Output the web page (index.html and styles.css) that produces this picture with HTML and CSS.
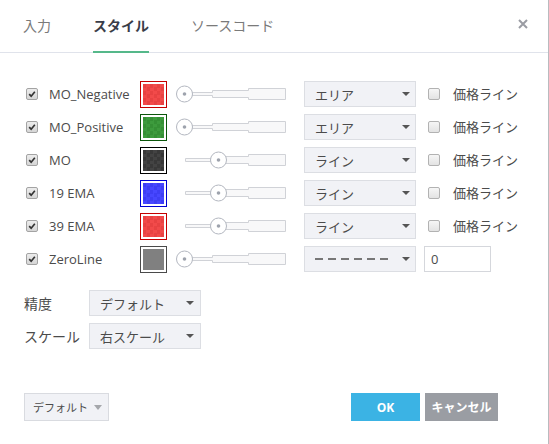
FILE: index.html
```html
<!DOCTYPE html>
<html lang="ja">
<head>
<meta charset="utf-8">
<link rel="stylesheet" href="styles.css">
</head>
<body>
<div class="dialog">
  <div class="header">
    <div class="tabs">
      <div class="tab">入力</div>
      <div class="tab active">スタイル</div>
      <div class="tab">ソースコード</div>
    </div>
    <svg class="close" width="10" height="10" viewBox="0 0 10 10"><path d="M1 1L9 9M9 1L1 9" stroke="#9a9ca3" stroke-width="2"/></svg>
  </div>

  <div class="content">
    <div class="grid">
      <!-- row 1 -->
      <span class="cb checked"><svg viewBox="0 0 12 12"><path d="M2.6 6.2L5 8.6L9.4 3.4" fill="none" stroke="#333" stroke-width="2"/></svg></span>
      <span class="label">MO_Negative</span>
      <span class="swatch red"><span class="fill"></span></span>
      <svg class="slider" width="110" height="26" viewBox="0 0 110 26"><path d="M9.5 11.5H36.5V9.5H72.5V7.5H109.5V18.5H72.5V16.5H36.5V14.5H9.5Z" fill="#f8f8f9" stroke="#d0d2d7"/><circle cx="8.5" cy="13" r="8" fill="#fff" stroke="#b3b7c0"/><circle cx="8.5" cy="13" r="1.8" fill="#9ea3ad"/></svg>
      <span class="select"><span>エリア</span><i class="caret"></i></span>
      <span class="cb"></span>
      <span class="label">価格ライン</span>

      <!-- row 2 -->
      <span class="cb checked"><svg viewBox="0 0 12 12"><path d="M2.6 6.2L5 8.6L9.4 3.4" fill="none" stroke="#333" stroke-width="2"/></svg></span>
      <span class="label">MO_Positive</span>
      <span class="swatch green"><span class="fill"></span></span>
      <svg class="slider" width="110" height="26" viewBox="0 0 110 26"><path d="M9.5 11.5H36.5V9.5H72.5V7.5H109.5V18.5H72.5V16.5H36.5V14.5H9.5Z" fill="#f8f8f9" stroke="#d0d2d7"/><circle cx="8.5" cy="13" r="8" fill="#fff" stroke="#b3b7c0"/><circle cx="8.5" cy="13" r="1.8" fill="#9ea3ad"/></svg>
      <span class="select"><span>エリア</span><i class="caret"></i></span>
      <span class="cb"></span>
      <span class="label">価格ライン</span>

      <!-- row 3 -->
      <span class="cb checked"><svg viewBox="0 0 12 12"><path d="M2.6 6.2L5 8.6L9.4 3.4" fill="none" stroke="#333" stroke-width="2"/></svg></span>
      <span class="label">MO</span>
      <span class="swatch black"><span class="fill"></span></span>
      <svg class="slider" width="110" height="26" viewBox="0 0 110 26"><path d="M9.5 11.5H36.5V9.5H72.5V7.5H109.5V18.5H72.5V16.5H36.5V14.5H9.5Z" fill="#f8f8f9" stroke="#d0d2d7"/><circle cx="42.5" cy="13" r="8" fill="#fff" stroke="#b3b7c0"/><circle cx="42.5" cy="13" r="1.8" fill="#9ea3ad"/></svg>
      <span class="select"><span>ライン</span><i class="caret"></i></span>
      <span class="cb"></span>
      <span class="label">価格ライン</span>

      <!-- row 4 -->
      <span class="cb checked"><svg viewBox="0 0 12 12"><path d="M2.6 6.2L5 8.6L9.4 3.4" fill="none" stroke="#333" stroke-width="2"/></svg></span>
      <span class="label">19 EMA</span>
      <span class="swatch blue"><span class="fill"></span></span>
      <svg class="slider" width="110" height="26" viewBox="0 0 110 26"><path d="M9.5 11.5H36.5V9.5H72.5V7.5H109.5V18.5H72.5V16.5H36.5V14.5H9.5Z" fill="#f8f8f9" stroke="#d0d2d7"/><circle cx="42.5" cy="13" r="8" fill="#fff" stroke="#b3b7c0"/><circle cx="42.5" cy="13" r="1.8" fill="#9ea3ad"/></svg>
      <span class="select"><span>ライン</span><i class="caret"></i></span>
      <span class="cb"></span>
      <span class="label">価格ライン</span>

      <!-- row 5 -->
      <span class="cb checked"><svg viewBox="0 0 12 12"><path d="M2.6 6.2L5 8.6L9.4 3.4" fill="none" stroke="#333" stroke-width="2"/></svg></span>
      <span class="label">39 EMA</span>
      <span class="swatch red"><span class="fill"></span></span>
      <svg class="slider" width="110" height="26" viewBox="0 0 110 26"><path d="M9.5 11.5H36.5V9.5H72.5V7.5H109.5V18.5H72.5V16.5H36.5V14.5H9.5Z" fill="#f8f8f9" stroke="#d0d2d7"/><circle cx="42.5" cy="13" r="8" fill="#fff" stroke="#b3b7c0"/><circle cx="42.5" cy="13" r="1.8" fill="#9ea3ad"/></svg>
      <span class="select"><span>ライン</span><i class="caret"></i></span>
      <span class="cb"></span>
      <span class="label">価格ライン</span>

      <!-- row 6 -->
      <span class="cb checked"><svg viewBox="0 0 12 12"><path d="M2.6 6.2L5 8.6L9.4 3.4" fill="none" stroke="#333" stroke-width="2"/></svg></span>
      <span class="label">ZeroLine</span>
      <span class="swatch gray"><span class="fill"></span></span>
      <svg class="slider" width="110" height="26" viewBox="0 0 110 26"><path d="M9.5 11.5H36.5V9.5H72.5V7.5H109.5V18.5H72.5V16.5H36.5V14.5H9.5Z" fill="#f8f8f9" stroke="#d0d2d7"/><circle cx="8.5" cy="13" r="8" fill="#fff" stroke="#b3b7c0"/><circle cx="8.5" cy="13" r="1.8" fill="#9ea3ad"/></svg>
      <span class="select"><svg class="dashes" width="76" height="4" viewBox="0 0 76 4"><line x1="0" y1="2" x2="76" y2="2" stroke="#777" stroke-width="2" stroke-dasharray="8 5"/></svg><i class="caret"></i></span>
      <span class="input">0</span>
    </div>

    <div class="opts">
      <div class="opt"><span class="optlabel">精度</span><span class="select small"><span>デフォルト</span><i class="caret"></i></span></div>
      <div class="opt"><span class="optlabel">スケール</span><span class="select small"><span>右スケール</span><i class="caret"></i></span></div>
    </div>
  </div>

  <div class="footer">
    <span class="defbtn"><span>デフォルト</span><i class="caret light"></i></span>
    <div class="actions">
      <span class="btn ok">OK</span>
      <span class="btn cancel">キャンセル</span>
    </div>
  </div>
</div>
</body>
</html>
```

FILE: styles.css
```css
* { box-sizing: border-box; }
html, body { margin: 0; padding: 0; background: #fff; }
body {
  font-family: "Open Sans", "Noto Sans CJK JP", sans-serif;
  font-size: 13px;
  color: #4b4b4b;
}
.dialog {
  width: 549px;
  height: 444px;
  border-right: 1px solid #b9bbbf;
  display: flex;
  flex-direction: column;
}
.header {
  height: 53px;
  border-bottom: 1px solid #e0e3eb;
  display: flex;
  align-items: flex-start;
  justify-content: space-between;
  padding: 0 20px 0 23px;
}
.tabs { display: flex; gap: 42px; }
.tab {
  height: 53px;
  margin-bottom: -1px;
  display: flex;
  align-items: center;
  padding-bottom: 3px;
  font-size: 14px;
  color: #7a7a7a;
}
.tab.active {
  font-weight: bold;
  color: #3a3d49;
  box-shadow: inset 0 -2px 0 #55b88a;
}
.close { margin-top: 19px; }

.content { padding: 28px 0 0 26px; }
.grid {
  display: grid;
  grid-template-columns: 23px 91px 36px 128px 120px 29px auto;
  grid-auto-rows: 26px;
  row-gap: 7px;
  align-items: center;
}
.cb {
  width: 12px;
  height: 12px;
  border: 1px solid #b2b2b2;
  border-radius: 2px;
  background: linear-gradient(#f6f6f6, #e3e3e3);
  display: block;
  margin-left: 4px;
}
.cb.checked {
  margin-left: 0;
  border-color: #a3a3a3;
  background: linear-gradient(#ececec, #d6d6d6);
}
.cb svg { display: block; width: 10px; height: 10px; }
.label { white-space: nowrap; line-height: 26px; }
.swatch {
  width: 27px;
  height: 27px;
  border: 1px solid;
  padding: 2px;
  background: #fff;
  display: block;
}
.swatch .fill { display: block; width: 100%; height: 100%; }
.swatch.red { border-color: #c40000; }
.swatch.red .fill { background: repeating-conic-gradient(#f24a4a 0 25%, #e84242 0 50%) 0 0 / 7px 7px; }
.swatch.green { border-color: #0b560b; }
.swatch.green .fill { background: repeating-conic-gradient(#3d9b3d 0 25%, #359035 0 50%) 0 0 / 7px 7px; }
.swatch.black { border-color: #000; }
.swatch.black .fill { background: repeating-conic-gradient(#434343 0 25%, #383838 0 50%) 0 0 / 7px 7px; }
.swatch.blue { border-color: #0000d0; }
.swatch.blue .fill { background: repeating-conic-gradient(#4747ff 0 25%, #3e3ef4 0 50%) 0 0 / 7px 7px; }
.swatch.gray { border-color: #4a4a4a; }
.swatch.gray .fill { background: #808080; }
.slider { display: block; }

.select {
  width: 112px;
  height: 26px;
  background: #f1f2f6;
  border: 1px solid #dcdee3;
  display: flex;
  align-items: center;
  justify-content: space-between;
  padding: 0 5px 0 10px;
  white-space: nowrap;
}
.caret {
  display: block;
  width: 0;
  height: 0;
  border-left: 4px solid transparent;
  border-right: 4px solid transparent;
  border-top: 4px solid #555;
}
.caret.light { border-top-color: #a5a7ab; border-top-width: 5px; }
.dashes { display: block; }
.input {
  width: 67px;
  height: 26px;
  border: 1px solid #d5d7dc;
  grid-column: 6 / 8;
  display: flex;
  align-items: center;
  padding-left: 6px;
}

.opts {
  margin-top: 18px;
  margin-left: -2px;
  display: flex;
  flex-direction: column;
  gap: 7px;
}
.opt { display: flex; align-items: center; }
.optlabel { width: 65px; font-size: 14px; }
.select.small { width: 112px; padding-right: 6px; }

.footer {
  margin-top: auto;
  padding: 0 50px 23px 24px;
  display: flex;
  justify-content: space-between;
  align-items: center;
}
.defbtn {
  width: 85px;
  height: 28px;
  background: #f1f2f6;
  border: 1px solid #d9dbe0;
  display: flex;
  align-items: center;
  justify-content: space-between;
  padding: 0 6px 0 8px;
  font-size: 11px;
  white-space: nowrap;
}
.actions { display: flex; gap: 5px; }
.btn {
  height: 28px;
  display: flex;
  align-items: center;
  justify-content: center;
  color: #fff;
  font-weight: bold;
  font-size: 12px;
}
.btn.ok { width: 69px; background: #3bb3e4; }
.btn.cancel { width: 73px; background: #9a9da3; }
```
